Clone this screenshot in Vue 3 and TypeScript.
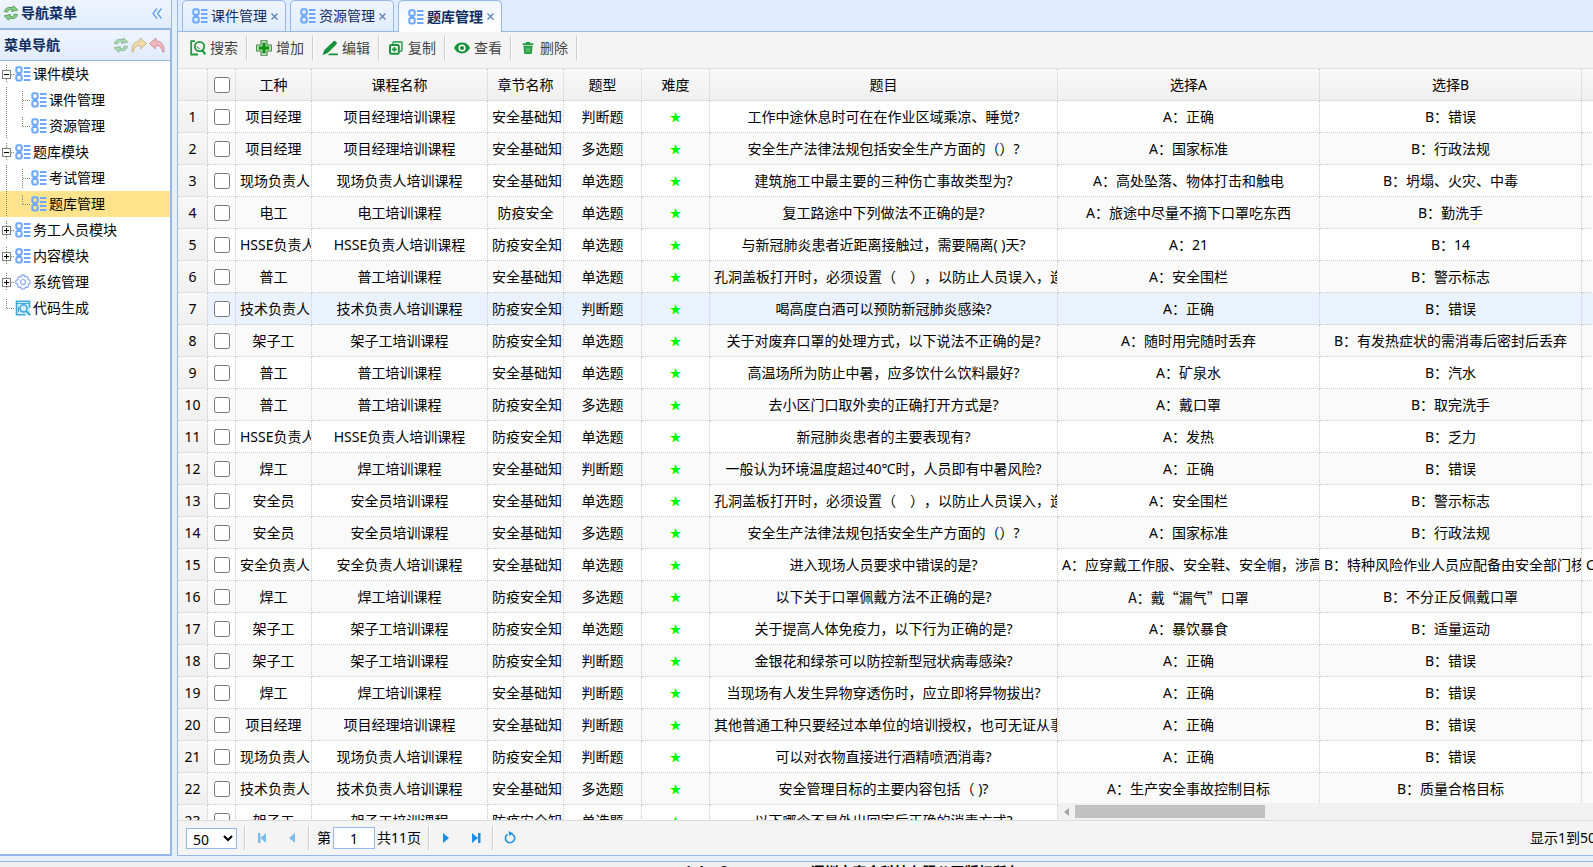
<script setup lang="ts">
import { ref } from 'vue'

interface TreeRow {
  text: string
  level: number
  kind: 'open' | 'closed' | 'mid' | 'last' | 'end'
  icon: 'grid' | 'gear' | 'code'
  selected?: boolean
}

interface Question {
  job: string
  chapter: string
  type: string
  title: string
  a: string
  b: string
  c?: string
}

const tree: TreeRow[] = [
  { text: '课件模块', level: 0, kind: 'open', icon: 'grid' },
  { text: '课件管理', level: 1, kind: 'mid', icon: 'grid' },
  { text: '资源管理', level: 1, kind: 'last', icon: 'grid' },
  { text: '题库模块', level: 0, kind: 'open', icon: 'grid' },
  { text: '考试管理', level: 1, kind: 'mid', icon: 'grid' },
  { text: '题库管理', level: 1, kind: 'last', icon: 'grid', selected: true },
  { text: '务工人员模块', level: 0, kind: 'closed', icon: 'grid' },
  { text: '内容模块', level: 0, kind: 'closed', icon: 'grid' },
  { text: '系统管理', level: 0, kind: 'closed', icon: 'gear' },
  { text: '代码生成', level: 0, kind: 'end', icon: 'code' },
]

const tabs = ['课件管理', '资源管理', '题库管理']
const activeTab = ref('题库管理')

const tools = [
  { icon: 'search', text: '搜索' },
  { icon: 'add', text: '增加' },
  { icon: 'edit', text: '编辑' },
  { icon: 'copy', text: '复制' },
  { icon: 'view', text: '查看' },
  { icon: 'remove', text: '删除' },
]

const BASE = '安全基础知识'
const EPI = '防疫安全知识'

const row = (job: string, chapter: string, type: string, title: string, a: string, b: string, c = ''): Question => ({
  job, chapter, type, title, a: 'A：' + a, b: 'B：' + b, c,
})

const rows: Question[] = [
  row('项目经理', BASE, '判断题', '工作中途休息时可在在作业区域乘凉、睡觉?', '正确', '错误'),
  row('项目经理', BASE, '多选题', '安全生产法律法规包括安全生产方面的（）?', '国家标准', '行政法规'),
  row('现场负责人', BASE, '单选题', '建筑施工中最主要的三种伤亡事故类型为?', '高处坠落、物体打击和触电', '坍塌、火灾、中毒'),
  row('电工', '防疫安全', '单选题', '复工路途中下列做法不正确的是?', '旅途中尽量不摘下口罩吃东西', '勤洗手'),
  row('HSSE负责人', EPI, '单选题', '与新冠肺炎患者近距离接触过，需要隔离( )天?', '21', '14'),
  row('普工', BASE, '单选题', '孔洞盖板打开时，必须设置（　），以防止人员误入，造成伤害', '安全围栏', '警示标志'),
  row('技术负责人', EPI, '判断题', '喝高度白酒可以预防新冠肺炎感染?', '正确', '错误'),
  row('架子工', EPI, '单选题', '关于对废弃口罩的处理方式，以下说法不正确的是?', '随时用完随时丢弃', '有发热症状的需消毒后密封后丢弃'),
  row('普工', BASE, '单选题', '高温场所为防止中暑，应多饮什么饮料最好?', '矿泉水', '汽水'),
  row('普工', EPI, '多选题', '去小区门口取外卖的正确打开方式是?', '戴口罩', '取完洗手'),
  row('HSSE负责人', EPI, '单选题', '新冠肺炎患者的主要表现有?', '发热', '乏力'),
  row('焊工', BASE, '判断题', '一般认为环境温度超过40℃时，人员即有中暑风险?', '正确', '错误'),
  row('安全员', BASE, '单选题', '孔洞盖板打开时，必须设置（　），以防止人员误入，造成伤害', '安全围栏', '警示标志'),
  row('安全员', BASE, '多选题', '安全生产法律法规包括安全生产方面的（）?', '国家标准', '行政法规'),
  row('安全负责人', BASE, '单选题', '进入现场人员要求中错误的是?', '应穿戴工作服、安全鞋、安全帽，涉高', '特种风险作业人员应配备由安全部门核', 'C：人员入场'),
  row('焊工', EPI, '多选题', '以下关于口罩佩戴方法不正确的是?', '戴“漏气”口罩', '不分正反佩戴口罩'),
  row('架子工', EPI, '单选题', '关于提高人体免疫力，以下行为正确的是?', '暴饮暴食', '适量运动'),
  row('架子工', EPI, '判断题', '金银花和绿茶可以防控新型冠状病毒感染?', '正确', '错误'),
  row('焊工', BASE, '判断题', '当现场有人发生异物穿透伤时，应立即将异物拔出?', '正确', '错误'),
  row('项目经理', BASE, '判断题', '其他普通工种只要经过本单位的培训授权，也可无证从事', '正确', '错误'),
  row('现场负责人', EPI, '判断题', '可以对衣物直接进行酒精喷洒消毒?', '正确', '错误'),
  row('技术负责人', BASE, '多选题', '安全管理目标的主要内容包括（ )?', '生产安全事故控制目标', '质量合格目标'),
  row('架子工', EPI, '单选题', '以下哪个不是外出回家后正确的消毒方式?', '洗手', '消毒'),
]

const hovered = 6
const pageSize = ref('50')
const page = ref('1')
</script>

<template>
  <div class="page">
    <svg class="defs" aria-hidden="true">
      <symbol id="i-grid" viewBox="0 0 16 16">
        <g fill="none" stroke="#6fa8fb" stroke-width="2">
          <rect x="1.300" y="1.300" width="5.400" height="5.400" rx="1.600" />
          <rect x="1.300" y="9" width="5.400" height="5.400" rx="1.600" />
          <path d="M2 7.900h4" stroke-width="2.400" />
          <path d="M9 2h6.500M9 6h6.500M9 10h6.500M9 14h6.500" />
        </g>
      </symbol>
      <symbol id="i-gear" viewBox="0 0 16 16">
        <g fill="none" stroke="#86a8f5" stroke-width="1.200" stroke-linejoin="round">
          <path d="M6.600 1.200 8 .8l1.400.4.600 1.700 1.800-.5 1.100.9.300 2 .1.300 1.800 1L15.300 8l-.4 1.400-1.700.8.300 2-1 1.100-2-.2-1 1.700-1.500.4-1.500-.4-1-1.700-2 .2-1-1.100.3-2-1.700-.8L.7 8l.4-1.400 1.800-1 .1-.3.300-2 1.100-.9 1.700.5z" />
          <circle cx="8" cy="8" r="2.500" />
        </g>
      </symbol>
      <symbol id="i-code" viewBox="0 0 16 16">
        <path d="M1 1h14v14H1z" fill="#d5eefa" />
        <g fill="none" stroke="#3fa9dc" stroke-width="1.600">
          <path d="M14.500 8V1.200h-13v13.600h9" />
          <path d="M1.500 3.500h13" stroke-width="1" />
          <circle cx="8.500" cy="8.300" r="3.600" />
          <path d="M11.200 11l4 4.200" stroke-width="2" />
          <path d="M3.500 7v5" stroke-width="1" />
        </g>
      </symbol>
      <symbol id="i-sync" viewBox="0 0 16 16">
        <g fill="#8fd08a" stroke="#3f8f45" stroke-width=".8" stroke-linejoin="round">
          <path d="M1.500 6.500C2.300 3 5.500 1.500 9.500 2.800L10.500.800l4.300 4.300-6.300 1.400.8-1.700C6.800 4 5 4.600 4.600 7z" />
          <path d="M14.500 9.500C13.700 13 10.500 14.500 6.500 13.200L5.500 15.200 1.200 10.900l6.300-1.400-.8 1.700c2.500.8 4.300.2 4.700-2.200z" />
        </g>
      </symbol>
      <symbol id="i-redo" viewBox="0 0 16 16">
        <path d="M1 15C.6 8 3.500 4 9 4V1l6.500 5.500L9.500 12V8.500C5.500 8.300 3 10.500 2.500 15z" fill="#f6cd7a" stroke="#b98a3c" stroke-width=".8" stroke-linejoin="round" />
      </symbol>
      <symbol id="i-undo" viewBox="0 0 16 16">
        <path d="M15 15c.4-7-2.500-11-8-11V1L.5 6.500 6.500 12V8.500c4-.2 6.500 2 7 6.500z" fill="#f39a9a" stroke="#b94a55" stroke-width=".8" stroke-linejoin="round" />
      </symbol>
      <symbol id="i-search" viewBox="0 0 16 16">
        <g fill="none" stroke="#1f9a3c" stroke-width="1.800">
          <path d="M5 1.200H1.200v13.300H8" />
          <circle cx="9.500" cy="6.500" r="4.700" />
          <path d="M12.300 10.300l3 4" stroke-width="2.200" />
          <path d="M7.300 6.500a2.200 2.200 0 0 0 2.200 2" stroke-width="1" />
        </g>
      </symbol>
      <symbol id="i-add" viewBox="0 0 16 16">
        <path d="M5 .7h6V5h4.300v6H11v4.300H5V11H.7V5H5z" fill="#fff" stroke="#2f7d32" stroke-width="1.100" stroke-linejoin="round" />
        <path d="M6.300 2.500h3.400v3.800h3.800v3.400H9.700v3.800H6.300V9.700H2.500V6.300h3.800z" fill="#149414" />
      </symbol>
      <symbol id="i-edit" viewBox="0 0 16 16">
        <path d="M11.500 1.200a1.500 1.500 0 0 1 2 0l1 1a1.500 1.500 0 0 1 0 2l-8.800 8.900L.5 15.200l1.700-5zM7.500 13.500H16v1.800H6z" fill="#17923a" />
      </symbol>
      <symbol id="i-copy" viewBox="0 0 16 16">
        <path d="M5 4V3a1 1 0 0 1 1-1h7a1 1 0 0 1 1 1v7a1 1 0 0 1-1 1h-1" fill="none" stroke="#4bb068" stroke-width="1.800" />
        <rect x="2" y="5" width="8.800" height="8.800" rx="1.200" fill="#fff" stroke="#17923a" stroke-width="2" />
        <path d="M6.400 7v4.800M4 9.400h4.800" stroke="#17923a" stroke-width="1.800" />
      </symbol>
      <symbol id="i-view" viewBox="0 0 16 16">
        <path d="M0 8c1.800-3.600 4.500-5.400 8-5.400S14.200 4.400 16 8c-1.800 3.600-4.500 5.400-8 5.400S1.800 11.600 0 8z" fill="#17923a" />
        <circle cx="8" cy="8" r="3.600" fill="#fff" />
        <circle cx="8" cy="8" r="2.100" fill="#17923a" />
      </symbol>
      <symbol id="i-remove" viewBox="0 0 16 16">
        <path d="M6 2h4v1.200h3.200v2H2.800v-2H6zM3.500 6h9l-.6 7.200a1 1 0 0 1-1 .8H5.100a1 1 0 0 1-1-.8z" fill="#1f9a3c" />
        <path d="M6.200 7.500v5M8 7.500v5M9.800 7.500v5" stroke="#8fd0a0" stroke-width=".8" />
      </symbol>
    </svg>

    <div class="work">
      <aside class="west">
        <header class="west-head">
          <svg class="ico"><use href="#i-sync" /></svg>
          <span class="west-title">导航菜单</span>
          <button class="collapse" aria-label="收起">
            <svg width="10" height="11" viewBox="0 0 10 11"><path d="M5 .5 1 5.500l4 5M9.500.5l-4 5 4 5" fill="none" stroke="#5c9fe6" stroke-width="1.300" /></svg>
          </button>
        </header>
        <section class="nav">
          <header class="nav-head">
            <span class="nav-title">菜单导航</span>
            <button class="mini" aria-label="刷新"><svg class="ico"><use href="#i-sync" /></svg></button>
            <button class="mini" aria-label="展开"><svg class="ico"><use href="#i-redo" /></svg></button>
            <button class="mini" aria-label="折叠"><svg class="ico"><use href="#i-undo" /></svg></button>
          </header>
          <ul class="tree">
            <li v-for="n in tree" :key="n.text" class="node" :class="{ selected: n.selected }">
              <svg v-if="n.level" class="joint" viewBox="0 0 15 26"><path d="M6.500 0v26" class="dots" /></svg>
              <svg class="joint" viewBox="0 0 15 26">
                <template v-if="n.kind === 'open' || n.kind === 'closed'">
                  <path d="M6.500 4v18M11 13.500h4" class="dots" />
                  <rect x="2.500" y="9.500" width="8" height="8" fill="#fff" stroke="#808080" />
                  <path :d="n.kind === 'closed' ? 'M4 13.500h5M6.500 11v5' : 'M4 13.500h5'" stroke="#000" />
                </template>
                <path v-else :d="n.kind === 'mid' ? 'M6.500 4v20M7 13.500h8' : 'M6.500 4v9.500h8.500'" class="dots" />
              </svg>
              <svg class="ico"><use :href="'#i-' + n.icon" /></svg>
              <a href="#" class="node-text">{{ n.text }}</a>
            </li>
          </ul>
        </section>
      </aside>

      <main class="center">
        <nav class="tabs">
          <div v-for="t in tabs" :key="t" class="tab" :class="{ on: t === activeTab }">
            <button class="tab-main" @click="activeTab = t">
              <svg class="ico"><use href="#i-grid" /></svg>
              <span>{{ t }}</span>
            </button>
            <button class="tab-close" aria-label="关闭">
              <svg width="7" height="7" viewBox="0 0 7 7"><path d="M.5.5l6 6M6.500.5l-6 6" stroke="#5a80b8" stroke-width="1.200" /></svg>
            </button>
          </div>
        </nav>

        <div class="toolbar">
          <template v-for="t in tools" :key="t.icon">
            <button class="tool">
              <svg class="ico"><use :href="'#i-' + t.icon" /></svg>
              <span>{{ t.text }}</span>
            </button>
            <i class="sep"></i>
          </template>
        </div>

        <div class="grid">
          <div class="frozen">
            <table>
              <colgroup>
                <col class="w-num" /><col class="w-check" /><col class="w-job" /><col class="w-course" />
                <col class="w-job" /><col class="w-type" /><col class="w-level" /><col class="w-title" />
              </colgroup>
              <thead>
                <tr>
                  <th></th>
                  <th><input type="checkbox" class="check" aria-label="全选" /></th>
                  <th>工种</th><th>课程名称</th><th>章节名称</th><th>题型</th><th>难度</th><th>题目</th>
                </tr>
              </thead>
              <tbody>
                <tr v-for="(r, i) in rows" :key="i" :class="{ hover: i === hovered }">
                  <td class="num">{{ i + 1 }}</td>
                  <td><input type="checkbox" class="check" :aria-label="'选择第' + (i + 1) + '行'" /></td>
                  <td><div class="cell">{{ r.job }}</div></td>
                  <td><div class="cell">{{ r.job }}培训课程</div></td>
                  <td><div class="cell">{{ r.chapter }}</div></td>
                  <td><div class="cell">{{ r.type }}</div></td>
                  <td><div class="cell star">★</div></td>
                  <td><div class="cell">{{ r.title }}</div></td>
                </tr>
              </tbody>
            </table>
          </div>
          <div class="scrolling">
            <div class="clip">
              <table class="wide">
                <thead>
                  <tr><th>选择A</th><th>选择B</th><th>选择C</th></tr>
                </thead>
                <tbody>
                  <tr v-for="(r, i) in rows" :key="i" :class="{ hover: i === hovered }">
                    <td><div class="cell" :class="{ quoted: r.a.includes('“') }">{{ r.a }}</div></td>
                    <td><div class="cell">{{ r.b }}</div></td>
                    <td><div class="cell left">{{ r.c }}</div></td>
                  </tr>
                </tbody>
              </table>
            </div>
            <div class="hbar">
              <svg width="5" height="8" viewBox="0 0 5 8"><path d="M5 0v8L0 4z" fill="#a3a3a3" /></svg>
              <div class="thumb"></div>
            </div>
          </div>
        </div>

        <footer class="pager">
          <select v-model="pageSize" class="size" aria-label="每页条数">
            <option>50</option>
            <option>100</option>
          </select>
          <i class="sep"></i>
          <button class="step off" aria-label="首页"><svg viewBox="0 0 16 16"><path d="M4 3h2.500v10H4zM12 3v10L6.500 8z" /></svg></button>
          <button class="step off" aria-label="上一页"><svg viewBox="0 0 16 16"><path d="M11 3v10L5 8z" /></svg></button>
          <i class="sep"></i>
          <label class="pages">第<input v-model="page" class="page-no" type="text" />共11页</label>
          <i class="sep"></i>
          <button class="step" aria-label="下一页"><svg viewBox="0 0 16 16"><path d="M5 3v10l6-5z" /></svg></button>
          <button class="step" aria-label="末页"><svg viewBox="0 0 16 16"><path d="M4 3v10l6-5zM10 3h2.500v10H10z" /></svg></button>
          <i class="sep"></i>
          <button class="step" aria-label="刷新">
            <svg viewBox="0 0 16 16"><path d="M5.500 4.300A4.600 4.600 0 1 0 10 4" fill="none" stroke="#2f96dd" stroke-width="1.700" /><path d="M6.500 1l4.500 2.300L7.500 6.300z" /></svg>
          </button>
          <span class="info">显示1到50,共521记录</span>
        </footer>
      </main>
    </div>
    <footer class="south">Copyright © 2021-2025 [深圳市安全科技有限公司版权所有]</footer>
  </div>
</template>

<style>
html,
body {
  margin: 0;
  overflow: hidden;
}
</style>

<style scoped>
.page {
  display: flex;
  flex-direction: column;
  height: 100vh;
  overflow: hidden;
  background: #e6eef8;
  color: #000;
  font: 14px/20px 'Noto Sans', 'Noto Sans CJK SC', sans-serif;
  text-spacing-trim: space-all;
}
.page * {
  box-sizing: border-box;
}
.defs {
  position: absolute;
  width: 0;
  height: 0;
}
button,
input,
select {
  font: inherit;
  margin: 0;
}
button {
  padding: 0;
  border: 0;
  background: none;
  color: inherit;
}
.ico {
  flex: none;
  width: 16px;
  height: 16px;
}

.work {
  display: flex;
  flex: 1;
  min-height: 0;
  gap: 5px;
  margin-bottom: 5px;
}
.west {
  display: flex;
  flex-direction: column;
  flex: 0 0 172px;
  border-bottom: 1px solid #95b8e7;
}
.west-head {
  display: flex;
  align-items: center;
  gap: 2px;
  height: 28px;
  padding: 0 9px 2px 3px;
  border-right: 1px solid #95b8e7;
  background: linear-gradient(#eff5ff, #e0ecff);
  color: #0e2d5f;
  font-weight: bold;
}
.west-title,
.nav-title {
  flex: 1;
}
.collapse {
  display: flex;
}
.nav {
  flex: 1;
  border: solid #95b8e7;
  border-width: 2px 2px 1px 0;
  background: #fff;
}
.nav-head {
  display: flex;
  align-items: center;
  gap: 2px;
  height: 31px;
  padding: 0 5px 0 4px;
  border-bottom: 1px solid #95b8e7;
  background: linear-gradient(#eff5ff, #e0ecff);
  color: #0e2d5f;
  font-weight: bold;
}
.mini {
  display: flex;
  opacity: 0.65;
}
.tree {
  margin: 0;
  padding: 0;
  list-style: none;
}
.node {
  display: flex;
  align-items: center;
  height: 26px;
}
.node.selected {
  background: #ffe48d;
}
.joint {
  flex: none;
  width: 15px;
  height: 26px;
}
.joint + .joint {
  margin-left: 1px;
}
.dots {
  fill: none;
  stroke: #808080;
  stroke-dasharray: 1 1;
}
.node-text {
  margin-left: 2px;
  color: #000;
  text-decoration: none;
}

.center {
  display: flex;
  flex: 1;
  flex-direction: column;
  min-width: 0;
  border: solid #95b8e7;
  border-width: 0 0 1px 1px;
  background: #fff;
}
.tabs {
  display: flex;
  flex: none;
  gap: 4px;
  height: 32px;
  padding: 0 4px;
  border-bottom: 1px solid #95b8e7;
  background: #e0ecff;
}
.tab {
  display: flex;
  align-items: center;
  gap: 4px;
  height: 31px;
  padding: 0 7px 0 9px;
  border: 1px solid #95b8e7;
  border-bottom: 0;
  border-radius: 5px 5px 0 0;
  background: linear-gradient(#eff5ff, #e0ecff);
  color: #0e2d5f;
}
.tab.on {
  height: 32px;
  background: linear-gradient(#eff5ff, #fff);
  font-weight: bold;
}
.tab-main {
  display: flex;
  align-items: center;
  gap: 3px;
}
.tab-close {
  display: flex;
}
.toolbar {
  display: flex;
  flex: none;
  align-items: center;
  height: 36px;
  padding: 0 6px 4px;
  background: #f4f4f4;
  color: #444;
}
.tool {
  display: flex;
  align-items: center;
  justify-content: center;
  gap: 4px;
  width: 60px;
}
.sep {
  flex: none;
  width: 2px;
  height: 24px;
  margin: 0 2px;
  border-left: 1px solid #ccc;
  border-right: 1px solid #fff;
}

.grid {
  display: flex;
  flex: 1;
  min-height: 0;
  overflow: hidden;
  border: solid #ddd;
  border-width: 1px 0;
}
.frozen {
  flex: none;
  overflow: hidden;
}
.scrolling {
  display: flex;
  flex: 1;
  flex-direction: column;
  min-width: 0;
}
.clip {
  flex: 1;
  min-height: 0;
  overflow: hidden;
}
table {
  width: 880px;
  table-layout: fixed;
  border-collapse: separate;
  border-spacing: 0;
}
.wide {
  width: 786px;
}
.w-num { width: 30px; }
.w-check { width: 28px; }
.w-job { width: 76px; }
.w-course { width: 176px; }
.w-type { width: 78px; }
.w-level { width: 68px; }
.w-title { width: 348px; }
th,
td {
  height: 32px;
  padding: 0;
  border-right: 1px dotted #ccc;
  border-bottom: 1px dotted #ccc;
  text-align: center;
  line-height: 20px;
}
th {
  border-bottom: 1px solid #ddd;
  background: linear-gradient(#f9f9f9, #efefef);
  font-weight: normal;
}
tbody tr:nth-child(even) {
  background: #fafafa;
}
tbody tr.hover {
  background: #eaf2ff;
}
.num {
  background: linear-gradient(#f9f9f9, #efefef);
}
.cell {
  display: flex;
  justify-content: safe center;
  margin: 0 0 0 4px;
  padding-right: 4px;
  overflow: hidden;
  white-space: nowrap;
}
.cell.left {
  justify-content: flex-start;
}
.quoted {
  font-family: 'Noto Sans CJK SC', sans-serif;
}
.star {
  color: #0f0;
  font-family: 'Noto Sans CJK SC', sans-serif;
  font-size: 12px;
}
.check {
  display: block;
  width: 16px;
  height: 16px;
  margin: 0 auto;
}
.hbar {
  display: flex;
  flex: none;
  align-items: center;
  gap: 6px;
  height: 17px;
  padding-left: 6px;
  background: #f1f1f1;
}
.thumb {
  width: 190px;
  height: 13px;
  background: #c1c1c1;
}

.pager {
  display: flex;
  flex: none;
  align-items: center;
  height: 34px;
  padding-left: 8px;
  background: #f4f4f4;
}
.pager .sep {
  margin: 0 4px;
}
.size {
  width: 51px;
  height: 21px;
  margin-right: 3px;
  padding: 0 0 2px 2px;
  border: 1px solid #95b8e7;
  background: #fff;
  color: #000;
}
.step {
  display: flex;
  justify-content: center;
  width: 24px;
}
.step + .step {
  margin-left: 6px;
}
.step svg {
  width: 16px;
  height: 16px;
  fill: #1a8fe6;
}
.step.off {
  opacity: 0.55;
}
.pages {
  display: flex;
  align-items: center;
  gap: 2px;
  margin: 0 3px;
}
.page-no {
  width: 42px;
  height: 22px;
  padding: 0;
  border: 1px solid #95b8e7;
  text-align: center;
}
.info {
  flex: 0 0 63px;
  margin-left: auto;
  overflow: hidden;
  white-space: nowrap;
}
.south {
  flex: none;
  height: 6px;
  padding-left: 78px;
  overflow: hidden;
  border-top: 1px solid #95b8e7;
  background: #efefef;
  text-align: center;
  font-weight: bold;
}
</style>
